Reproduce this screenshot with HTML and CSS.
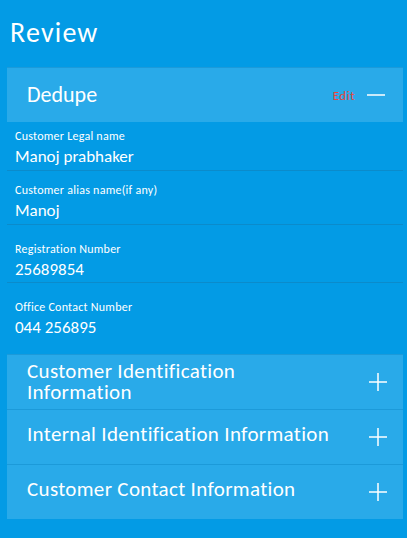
FILE: index.html
```html
<!DOCTYPE html>
<html lang="en">
<head>
<meta charset="utf-8">
<title>Review</title>
<link rel="stylesheet" href="styles.css">
</head>
<body>
<main class="page">
  <h1 class="page-title">Review</h1>

  <section class="section">
    <header class="panel panel--open">
      <span class="panel-title panel-title--main">Dedupe</span>
      <span class="edit">Edit</span>
      <svg class="icon" width="18" height="18" viewBox="0 0 18 18" aria-hidden="true">
        <line x1="0" y1="9" x2="18" y2="9" stroke="#fff" stroke-width="1.5"/>
      </svg>
    </header>
    <div class="section-body">
      <div class="field field--first">
        <div class="field-label">Customer Legal name</div>
        <div class="field-value">Manoj prabhaker</div>
      </div>
      <div class="field">
        <div class="field-label">Customer alias name(if any)</div>
        <div class="field-value">Manoj</div>
      </div>
      <div class="field field--spaced">
        <div class="field-label">Registration Number</div>
        <div class="field-value">25689854</div>
      </div>
      <div class="field field--spaced field--last">
        <div class="field-label">Office Contact Number</div>
        <div class="field-value">044 256895</div>
      </div>
    </div>
  </section>

  <section class="panel panel--closed">
    <span class="panel-title panel-title--multi">Customer Identification Information</span>
    <svg class="icon" width="18" height="18" viewBox="0 0 18 18" aria-hidden="true">
      <line x1="0" y1="9" x2="18" y2="9" stroke="#fff" stroke-width="1.5"/>
      <line x1="9" y1="0" x2="9" y2="18" stroke="#fff" stroke-width="1.5"/>
    </svg>
  </section>
  <section class="panel panel--closed">
    <span class="panel-title">Internal Identification Information</span>
    <svg class="icon" width="18" height="18" viewBox="0 0 18 18" aria-hidden="true">
      <line x1="0" y1="9" x2="18" y2="9" stroke="#fff" stroke-width="1.5"/>
      <line x1="9" y1="0" x2="9" y2="18" stroke="#fff" stroke-width="1.5"/>
    </svg>
  </section>
  <section class="panel panel--closed">
    <span class="panel-title">Customer Contact Information</span>
    <svg class="icon" width="18" height="18" viewBox="0 0 18 18" aria-hidden="true">
      <line x1="0" y1="9" x2="18" y2="9" stroke="#fff" stroke-width="1.5"/>
      <line x1="9" y1="0" x2="9" y2="18" stroke="#fff" stroke-width="1.5"/>
    </svg>
  </section>
</main>
</body>
</html>
```

FILE: styles.css
```css
html, body {
  margin: 0;
  padding: 0;
  background: #039be5;
}

body {
  font-family: Carlito, Lato, "Open Sans", sans-serif;
  color: #ffffff;
  width: 407px;
  height: 538px;
  overflow: hidden;
}

.page {
  padding: 17px 4px 0 7px;
}

.page-title {
  margin: 0 0 18px 3px;
  font-size: 28px;
  font-weight: 400;
  line-height: 32px;
  letter-spacing: 1.2px;
}

.panel {
  display: flex;
  align-items: center;
  height: 54px;
  padding: 0 16px 0 20px;
  background: #29aae9;
  border-top: 1px solid #1c9ad9;
}

.panel-title {
  flex: 1;
  margin-right: 32px;
  font-size: 21px;
  line-height: 21px;
  letter-spacing: 0.33px;
  padding-bottom: 6px;
}

.panel-title--multi {
  padding-bottom: 0;
}

.panel-title--main {
  font-size: 22px;
  line-height: 24px;
  letter-spacing: 0;
  padding-bottom: 0;
  margin-right: 0;
}

.edit {
  color: #e5463b;
  font-size: 13px;
  letter-spacing: 0.5px;
  margin-right: 12px;
}

.icon {
  display: block;
  flex: none;
}

.panel--open .icon {
  margin-right: 2px;
}

.section-body {
  padding-bottom: 13px;
}

.field {
  padding: 13px 8px 4px 8px;
  border-bottom: 1px solid #0b8bcb;
}

.field--first {
  padding-top: 8px;
}

.field--spaced {
  padding-top: 18px;
  padding-bottom: 3px;
}

.field--last {
  border-bottom: none;
  padding-bottom: 4px;
}

.field-label {
  font-size: 12px;
  line-height: 13px;
  letter-spacing: 0.25px;
  margin-bottom: 5px;
}

.field-value {
  font-size: 17px;
  line-height: 18px;
  letter-spacing: 0;
}
```
